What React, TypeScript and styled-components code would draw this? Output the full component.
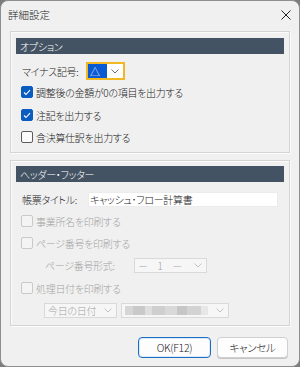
import React from "react";
import styled, {createGlobalStyle} from "styled-components";

const GlobalStyle = createGlobalStyle`
    html, body {
        margin: 0;
        padding: 0;
        background: #7c7c7c;
    }
    body {
        font-family: "Noto Sans CJK JP", "Noto Sans", sans-serif;
        font-size: 10px;
        font-weight: 300;
        letter-spacing: -0.3px;
        font-feature-settings: "palt";
        color: #1a1a1a;
        white-space: nowrap;
    }
`;

const Dialog = styled.div`
    width: 300px;
    height: 367px;
    box-sizing: border-box;
    border: 1px solid #8e8e8e;
    border-radius: 8px;
    background: #f0f0f0;
    display: flex;
    flex-direction: column;
    overflow: hidden;
`;

const TitleBar = styled.div`
    height: 27px;
    display: flex;
    align-items: center;
    justify-content: space-between;
    padding: 0 8px 0 7px;
`;

const TitleText = styled.span`
    font-size: 10.5px;
    letter-spacing: 0;
    color: #1a1a1a;
`;

const Body = styled.div`
    padding: 3px 9px 0;
    display: flex;
    flex-direction: column;
`;

const Group = styled.div<{ $gap?: number }>`
    margin-top: ${p => p.$gap || 0}px;
    border: 1px solid #d4d4d4;
    box-shadow: inset 1px 1px 0 #fbfbfb, 1px 1px 0 #fbfbfb;
    padding: ${p => p.$gap ? "5px 5px 7px" : "6px 5px 4px"};
    display: flex;
    flex-direction: column;
`;

const SectionBar = styled.div`
    height: 16px;
    background: #435363;
    color: #ffffff;
    padding-left: 4px;
    display: flex;
    align-items: center;
`;

const Row = styled.div<{ $top?: number; $height?: number; $indent?: number }>`
    display: flex;
    align-items: center;
    margin-top: ${p => p.$top || 0}px;
    height: ${p => p.$height || 22}px;
    padding-left: ${p => p.$indent ?? 5}px;
    padding-right: 6px;
`;

const Label = styled.span<{ $width: number; $disabled?: boolean }>`
    width: ${p => p.$width}px;
    flex-shrink: 0;
    color: ${p => p.$disabled ? "#a3a3a3" : "#1a1a1a"};
`;

const CheckLabel = styled.label<{ $disabled?: boolean }>`
    display: flex;
    align-items: center;
    gap: 3px;
    color: ${p => p.$disabled ? "#a3a3a3" : "#1a1a1a"};
`;

const Box = styled.span<{ $checked?: boolean; $disabled?: boolean }>`
    width: 12px;
    height: 12px;
    box-sizing: border-box;
    border-radius: 2px;
    display: flex;
    align-items: center;
    justify-content: center;
    border: 1px solid ${p => p.$checked ? "#0b5cc0" : p.$disabled ? "#c9c9c9" : "#5c5c5c"};
    background: ${p => p.$checked ? "#0b5cc0" : p.$disabled ? "#f4f4f4" : "#fbfbfb"};
`;

const SelectBox = styled.div<{ $width: number; $focused?: boolean; $disabled?: boolean; $left?: number }>`
    width: ${p => p.$width}px;
    height: ${p => p.$focused ? 18 : 15}px;
    margin-left: ${p => p.$left || 0}px;
    flex-shrink: 0;
    box-sizing: border-box;
    display: flex;
    align-items: center;
    border: ${p => p.$focused ? "2px solid #f2b824" : "1px solid #d9d9d9"};
    background: ${p => p.$disabled ? "#f6f6f6" : "#ffffff"};
    color: ${p => p.$disabled ? "#a3a3a3" : "#1a1a1a"};
`;

const SelectValue = styled.span<{ $highlight?: boolean }>`
    flex: 1;
    height: 100%;
    display: flex;
    align-items: center;
    padding-left: 3px;
    overflow: hidden;
    ${p => p.$highlight ? `
        flex: 0 0 19px;
        box-sizing: border-box;
        padding-left: 2px;
        background: #0a5ad4;
        color: #ffffff;
    ` : ""}
`;

const Chevron = styled.span<{ $light?: boolean }>`
    width: 16px;
    height: 100%;
    flex-shrink: 0;
    display: flex;
    align-items: center;
    justify-content: center;
    margin-left: auto;
    color: ${p => p.$light ? "#c4c4c4" : "#707070"};
`;

const Mosaic = styled.span`
    flex: 1;
    height: 9px;
    margin: 0 4px 0 3px;
    background: linear-gradient(90deg,
        #d6d6d6 0 8px, #c9c9c9 8px 20px, #dedede 20px 27px, #cfcfcf 27px 40px,
        #d9d9d9 40px 52px, #c6c6c6 52px 62px, #d3d3d3 62px 76px, #e7e7e7 76px 86px);
`;

const TextInput = styled.div`
    width: 190px;
    height: 15px;
    box-sizing: border-box;
    background: #ffffff;
    border: 1px solid #ececec;
    display: flex;
    align-items: center;
    padding-left: 1px;
`;

const ButtonRow = styled.div`
    display: flex;
    justify-content: flex-end;
    gap: 6px;
    margin-top: 11px;
    padding-right: 2px;
`;

const Button = styled.div<{ $width: number; $primary?: boolean }>`
    width: ${p => p.$width}px;
    height: 21px;
    box-sizing: border-box;
    border-radius: 4px;
    display: flex;
    align-items: center;
    justify-content: center;
    background: #fdfdfd;
    border: 1px solid ${p => p.$primary ? "#1a6fc4" : "#d0d0d0"};
    box-shadow: ${p => p.$primary ? "inset 0 0 0 1px #dce9f7" : "0 1px 0 #c4c4c4"};
    color: #1a1a1a;
    font-size: 10.5px;
`;

const ChevronIcon = () => (
    <svg width="8" height="5" viewBox="0 0 8 5">
        <polyline points="0.5,0.5 4,4 7.5,0.5" fill="none" stroke="currentColor" strokeWidth="1"/>
    </svg>
);

const Checkbox = ({checked, disabled, children}: { checked?: boolean; disabled?: boolean; children: React.ReactNode }) => (
    <CheckLabel $disabled={disabled}>
        <Box $checked={checked} $disabled={disabled}>
            {checked && (
                <svg width="8" height="7" viewBox="0 0 8 7">
                    <polyline points="1,3.5 3,5.5 7,1.2" fill="none" stroke="#ffffff" strokeWidth="1.1"/>
                </svg>
            )}
        </Box>
        {children}
    </CheckLabel>
);

export default function App() {
    return (
        <>
            <GlobalStyle/>
            <Dialog>
                <TitleBar>
                    <TitleText>詳細設定</TitleText>
                    <svg width="10" height="10" viewBox="0 0 10 10">
                        <path d="M0.5 0.5 L9.5 9.5 M9.5 0.5 L0.5 9.5" stroke="#222" strokeWidth="1"/>
                    </svg>
                </TitleBar>
                <Body>
                    <Group>
                        <SectionBar>オプション</SectionBar>
                        <Row $top={8} $height={18} $indent={6}>
                            <Label $width={64}>マイナス記号:</Label>
                            <SelectBox $width={39} $focused>
                                <SelectValue $highlight>△</SelectValue>
                                <Chevron><ChevronIcon/></Chevron>
                            </SelectBox>
                        </Row>
                        <Row $top={1}>
                            <Checkbox checked>調整後の金額が0の項目を出力する</Checkbox>
                        </Row>
                        <Row $top={1}>
                            <Checkbox checked>注記を出力する</Checkbox>
                        </Row>
                        <Row>
                            <Checkbox>含決算仕訳を出力する</Checkbox>
                        </Row>
                    </Group>

                    <Group $gap={7}>
                        <SectionBar>ヘッダー・フッター</SectionBar>
                        <Row $top={10} $height={15} $indent={6}>
                            <Label $width={66}>帳票タイトル:</Label>
                            <TextInput>キャッシュ･フロー計算書</TextInput>
                        </Row>
                        <Row $top={3}>
                            <Checkbox disabled>事業所名を印刷する</Checkbox>
                        </Row>
                        <Row>
                            <Checkbox disabled>ページ番号を印刷する</Checkbox>
                        </Row>
                        <Row $top={4} $height={15} $indent={29}>
                            <Label $width={89} $disabled>ページ番号形式:</Label>
                            <SelectBox $width={73} $disabled>
                                <SelectValue>－　1　－</SelectValue>
                                <Chevron $light><ChevronIcon/></Chevron>
                            </SelectBox>
                        </Row>
                        <Row $top={4}>
                            <Checkbox disabled>処理日付を印刷する</Checkbox>
                        </Row>
                        <Row $top={4} $height={15} $indent={28}>
                            <SelectBox $width={73} $disabled>
                                <SelectValue>今日の日付</SelectValue>
                                <Chevron $light><ChevronIcon/></Chevron>
                            </SelectBox>
                            <SelectBox $width={108} $disabled $left={4}>
                                <Mosaic/>
                                <Chevron $light><ChevronIcon/></Chevron>
                            </SelectBox>
                        </Row>
                    </Group>

                    <ButtonRow>
                        <Button $width={73} $primary>OK(F12)</Button>
                        <Button $width={71}>キャンセル</Button>
                    </ButtonRow>
                </Body>
            </Dialog>
        </>
    );
}
